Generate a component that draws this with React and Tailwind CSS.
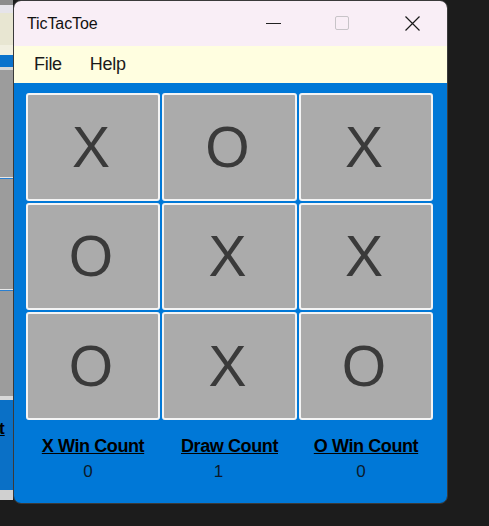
const board = ['X', 'O', 'X', 'O', 'X', 'X', 'O', 'X', 'O'];

const stats = [
  { label: 'X Win Count', value: 0, pad: 'pr-[10px]' },
  { label: 'Draw Count', value: 1, pad: 'pr-[22px]' },
  { label: 'O Win Count', value: 0, pad: 'pr-[10px]' },
];

// window behind, only a slice of it shows on the left
const BehindStrip = () => (
  <div className="w-[13px] h-full flex flex-col shrink-0">
    <div className="h-[5px] bg-[#8c8c8c]" />
    <div className="h-[8px] bg-[#e6e4ea]" />
    <div className="h-[32px] bg-[#e8e6d2]" />
    <div className="h-[10px] bg-[#f1efe0]" />
    <div className="h-[12px] bg-[#0a72cc]" />
    <div className="h-[3px] bg-[#d6d6d6]" />
    <div className="h-[107px] bg-[#9c9c9c]" />
    <div className="h-[1px] bg-[#e8e8e8]" />
    <div className="h-[1px] bg-[#2a7fd0]" />
    <div className="h-[110px] bg-[#9c9c9c]" />
    <div className="h-[1px] bg-[#e8e8e8]" />
    <div className="h-[1px] bg-[#2a7fd0]" />
    <div className="h-[105px] bg-[#9c9c9c]" />
    <div className="h-[4px] bg-[#d8d8d8]" />
    <div className="h-[90px] bg-[#0a70c6] pt-[20px]">
      <span className="block text-[17px] font-bold underline text-black leading-none -ml-[1px]" style={{ fontFamily: '"Liberation Sans", sans-serif' }}>t</span>
    </div>
    <div className="h-[10px] bg-[#d0d0d0]" />
  </div>
);

const TitleBar = () => (
  <div className="h-[45px] bg-[#f9eef6] flex items-center relative shrink-0">
    <span className="pl-[13px] text-[16px] tracking-[-0.1px] text-[#111]" style={{ fontFamily: '"Liberation Sans", sans-serif' }}>TicTacToe</span>
    <div className="absolute left-[252px] top-[22px] w-[15px] h-[1px] bg-[#222]" />
    <div className="absolute left-[321px] top-[15px] w-[14px] h-[14px] border border-[#c8c4c8] rounded-[2px]" />
    <svg className="absolute left-[391px] top-[15px]" width="15" height="15" viewBox="0 0 15 15">
      <path d="M0.5 0.5 L14.5 14.5 M14.5 0.5 L0.5 14.5" stroke="#1a1a1a" strokeWidth="1.2" fill="none" />
    </svg>
  </div>
);

const MenuBar = () => (
  <div className="h-[37px] bg-[#fffee0] flex items-center gap-[28px] pl-[20px] text-[18px] tracking-[-0.3px] text-[#1a1a1a] shrink-0" style={{ fontFamily: '"Liberation Sans", sans-serif' }}>
    <span>File</span>
    <span>Help</span>
  </div>
);

export default function App() {
  return (
    <div className="w-[489px] h-[526px] bg-[#1c1c1c] flex overflow-hidden">
      <BehindStrip />
      <div className="w-[435px] h-[504px] shrink-0 rounded-[8px] border border-[#3a3a3a] overflow-hidden flex flex-col">
        <TitleBar />
        <MenuBar />
        <div className="flex-1 bg-[#0078d7] pt-[10px] pl-[12px]" style={{ fontFamily: '"Liberation Sans", sans-serif' }}>
          <div className="grid grid-cols-[134px_135px_134px] grid-rows-[108px_107px_108px] gap-[2px]">
            {board.map((v, i) => (
              <div key={i} className="bg-[#ababab] border-2 border-[#f4f4f4] rounded-[3px] flex items-center justify-center">
                <span className="text-[57px] leading-none text-[#3a3a3a] -ml-[4px]">{v}</span>
              </div>
            ))}
          </div>
          <div className="grid grid-cols-[134px_135px_134px] gap-[2px] mt-[16px]">
            {stats.map((s) => (
              <div key={s.label} className="flex flex-col items-center">
                <span className="text-[18px] font-bold underline tracking-[-0.4px] text-black leading-[20px]">{s.label}</span>
              </div>
            ))}
          </div>
          <div className="grid grid-cols-[134px_135px_134px] gap-[2px] mt-[6px]">
            {stats.map((s) => (
              <div key={s.label} className={`flex justify-center ${s.pad}`}>
                <span className="text-[17px] text-[#0b1a2b] leading-[20px]">{s.value}</span>
              </div>
            ))}
          </div>
        </div>
      </div>
    </div>
  );
}
